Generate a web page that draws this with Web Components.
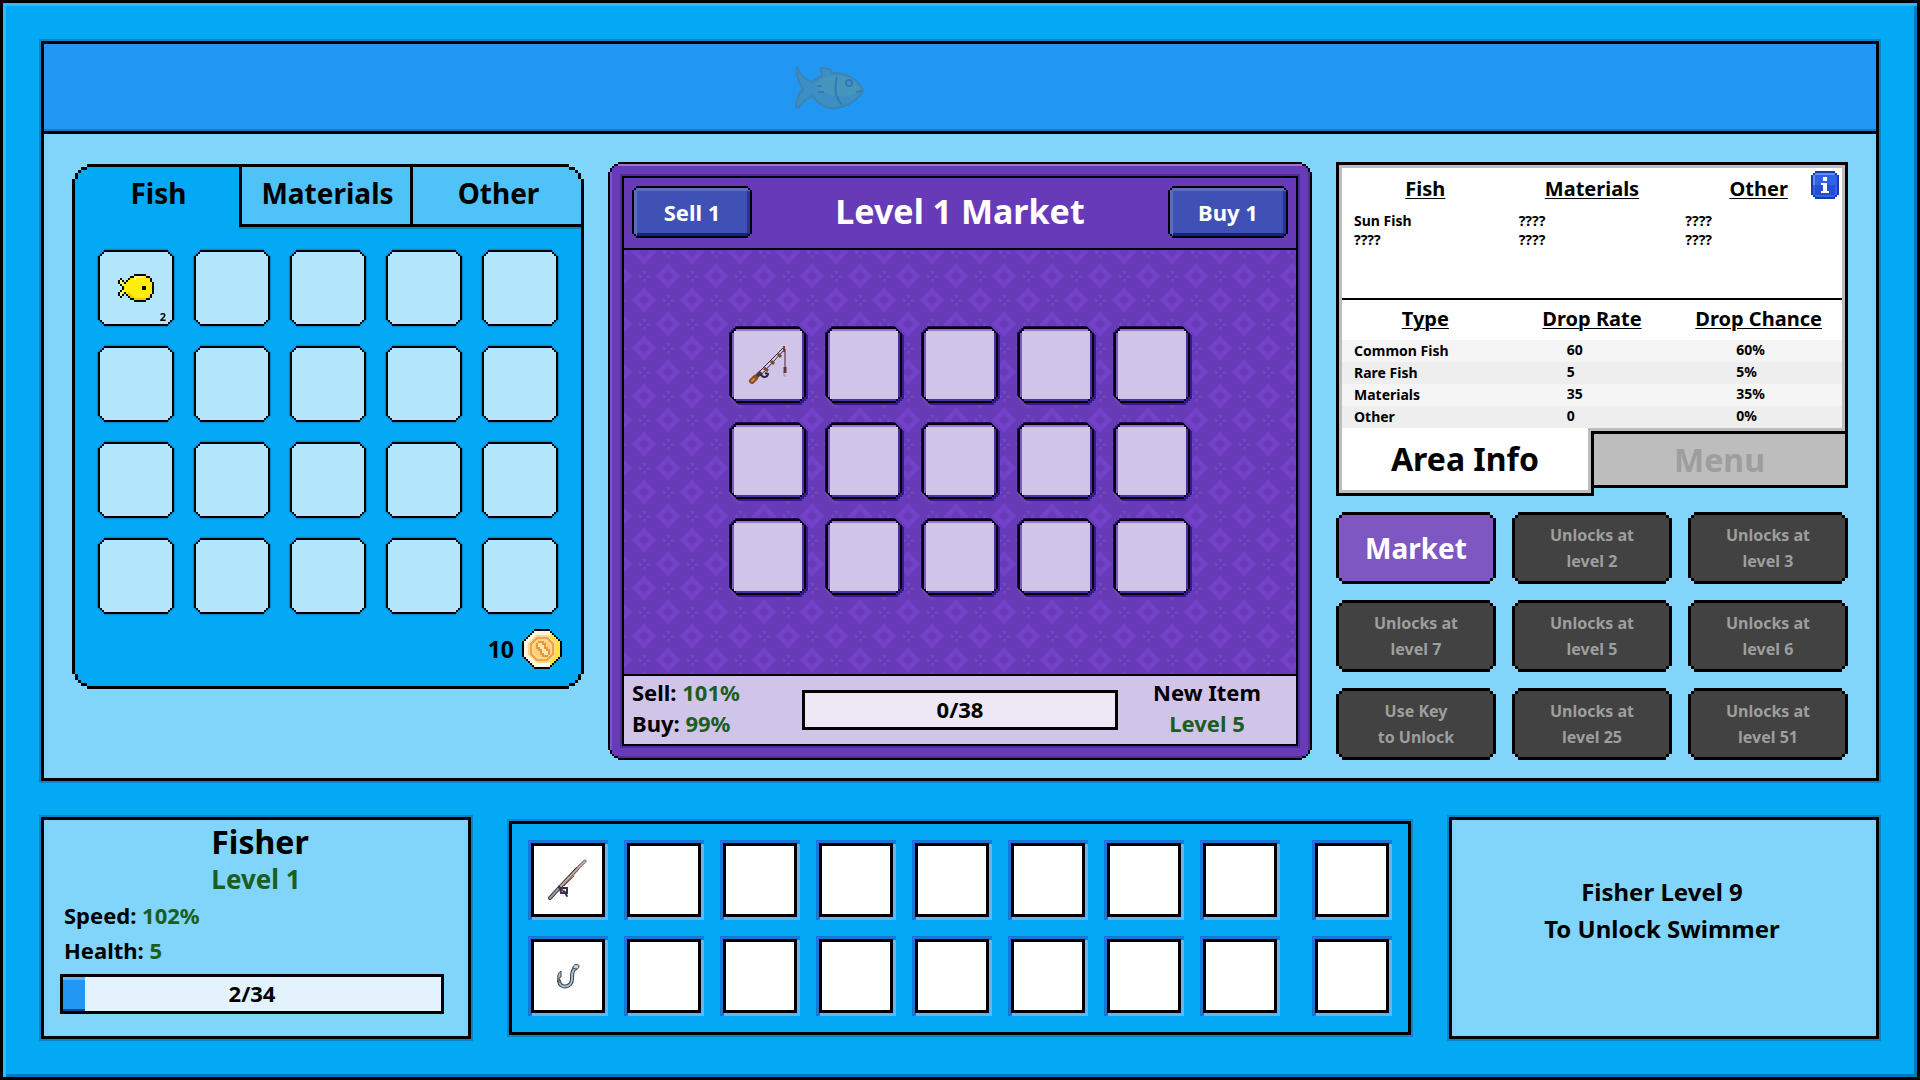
<!DOCTYPE html>
<html lang="en">
<head>
<meta charset="utf-8">
<title>Fisher</title>
<style>
    body {
        margin: 0;
        background: #03a9f4;
        color: #000;
        font-family: "Noto Sans", "Open Sans", sans-serif;
        font-weight: 700;
    }
</style>
</head>
<body>
<game-app></game-app>

<script>
// polygon with stair-stepped corners, the points are in units of --u
function stairs(points) {
    const far = (n) => `calc(100% - ${n} * var(--u))`;
    const near = (n) => `calc(${n} * var(--u))`;
    const back = [...points].reverse();
    return "polygon(" + [
        ...points.map(([x, y]) => `${near(x)} ${near(y)}`),
        ...back.map(([x, y]) => `${far(x)} ${near(y)}`),
        ...points.map(([x, y]) => `${far(x)} ${far(y)}`),
        ...back.map(([x, y]) => `${near(x)} ${far(y)}`)
    ].join(",") + ")";
}

const CORNERS = {
    small: {
        outer: [[0, 2], [1, 2], [1, 1], [2, 1], [2, 0]],
        inner: [[0, 1], [1, 1], [1, 0]]
    },
    medium: {
        outer: [[0, 3], [1, 3], [1, 2], [2, 2], [2, 1], [3, 1], [3, 0]],
        inner: [[0, 2], [1, 2], [1, 1], [2, 1], [2, 0]]
    },
    large: {
        outer: [[0, 5], [1, 5], [1, 3], [2, 3], [2, 2], [3, 2], [3, 1], [5, 1], [5, 0]],
        inner: [[0, 4], [1, 4], [1, 2], [2, 2], [2, 1], [4, 1], [4, 0]]
    }
};

class PixelFrame extends HTMLElement {
    connectedCallback() {
        const corner = CORNERS[this.getAttribute("corner") || "medium"];
        this.attachShadow({mode: "open"});
        this.shadowRoot.innerHTML = `
            <style>
                :host { display: grid; --u: 2px; }
                .edge {
                    display: grid;
                    padding: var(--u);
                    background: #000;
                    clip-path: ${stairs(corner.outer)};
                }
                .face {
                    display: grid;
                    min-width: 0;
                    background: var(--face, #b3e5fc);
                    box-shadow: var(--bevel, none);
                    clip-path: ${stairs(corner.inner)};
                }
            </style>
            <div class="edge"><div class="face"><slot></slot></div></div>
        `;
    }
}

class GameButton extends HTMLElement {
    connectedCallback() {
        const corner = CORNERS[this.getAttribute("corner") || "small"];
        const disabled = this.hasAttribute("locked") ? "disabled" : "";
        this.attachShadow({mode: "open"});
        this.shadowRoot.innerHTML = `
            <style>
                :host { display: grid; --u: 3px; }
                button {
                    display: grid;
                    margin: 0;
                    padding: var(--u);
                    border: 0;
                    background: #000;
                    color: inherit;
                    font: inherit;
                    text-align: center;
                    cursor: pointer;
                    clip-path: ${stairs(corner.outer)};
                }
                button:disabled { cursor: default; }
                span {
                    display: grid;
                    place-content: center;
                    background: var(--face);
                    box-shadow: var(--bevel, none);
                    clip-path: ${stairs(corner.inner)};
                }
            </style>
            <button type="button" ${disabled}><span><slot></slot></span></button>
        `;
    }
}

const ART = {
    sunfish: {
        colors: {k: "#0a0a10", y: "#ffee0a", h: "#fff68a", d: "#eccc00"},
        rows: [
            "........kkkkkk....",
            "......kkhhhhhykk..",
            ".k...kyyhyyyyyyyk.",
            "khk.kyyyyyyyyyyyk.",
            "khykyyyyyyyyyyyyyk",
            ".khyyyyyyyyyyyyyyk",
            "..kyyyyyyyyykkyyyk",
            "..kyyyyyyyyykkyyyk",
            ".khyyyyyyyyyyyyyyk",
            "khykydyyyyyyyyyyyk",
            "khk.kddyyyyyyyyyk.",
            ".k...kddyyyyyyydk.",
            "......kkddddddkk..",
            "........kkkkkk...."
        ]
    }
};

// draws rows of characters as 2px squares
class PixelArt extends HTMLElement {
    connectedCallback() {
        const {rows, colors} = ART[this.getAttribute("name")];
        const w = rows[0].length;
        const h = rows.length;
        let rects = "";
        rows.forEach((row, y) => [...row].forEach((c, x) => {
            if (c !== ".") rects += `<rect x="${x}" y="${y}" width="1" height="1" fill="${colors[c]}"/>`;
        }));
        this.attachShadow({mode: "open"});
        this.shadowRoot.innerHTML = `
            <style>:host, svg { display: block; }</style>
            <svg width="${w * 2}" height="${h * 2}" viewBox="0 0 ${w} ${h}" shape-rendering="crispEdges" aria-hidden="true">${rects}</svg>
        `;
    }
}

const ICONS = {
    coin: `<svg width="40" height="40" viewBox="0 0 20 20" shape-rendering="crispEdges">
        <path fill="#000" d="M6 0h8v1h1v1h1v1h1v1h1v1h1v1h1v8h-1v1h-1v1h-1v1h-1v1h-1v1h-1v1H6v-1H5v-1H4v-1H3v-1H2v-1H1v-1H0V6h1V5h1V4h1V3h1V2h1V1h1z"/>
        <path fill="#fffbe0" d="M6 1h8v1h1v1h1v1h1v1h1v1h1v8h-1v1h-1v1h-1v1h-1v1h-1v1H6v-1H5v-1H4v-1H3v-1H2v-1H1V6h1V5h1V4h1V3h1V2h1z"/>
        <path fill="#ffe23d" d="M14 2h1v1h1v1h1v1h1v1h1v8h-1v1h-1v1h-1v1h-1v1h-1v-2l2-2V7l-2-3z"/>
        <path fill="#ffd98a" d="M7 3h6l4 4v6l-4 4H7l-4-4V7z"/>
        <path fill="none" stroke="#f3a24c" d="M7.500 4.500h5l3 3v5l-3 3h-5l-3-3v-5z"/>
        <path fill="#ffd07a" d="M8 6h4l2 2v4l-2 2H8l-2-2V8z"/>
        <path fill="#ec9443" d="M8 6h3v1h1v2h1v1h1v3h-1v1h-3v-1H9v-2H8v-1H7V7h1z"/>
        <path fill="#ffe7a8" d="M8 7h2v1h1v2h1v1h1v2h-2v-1h-1v-2H9V9H8z"/>
    </svg>`,
    caneRod: `<svg width="42" height="42" viewBox="0 0 42 42" fill="none">
        <path stroke="#3e2a35" d="M10 30 37 3M13 32 38 5"/>
        <path stroke="#dccbd6" d="M12 30 38 4"/>
        <path stroke="#7b4a2d" stroke-width="3" d="M17 24l4 3M24 17l3 3M31 10l3 3"/>
        <path stroke="#4b3340" stroke-width="4" d="M8 34l6-6"/>
        <path stroke="#8a4d24" stroke-width="6" stroke-linecap="round" d="M5 37l3-3"/>
        <path stroke="#d08a42" stroke-width="2" stroke-linecap="round" d="M5 37l2-2"/>
        <path stroke="#2c2740" stroke-width="2" d="M14 30c1 4 6 4 7 0l-3-1"/>
        <path stroke="#8a3a32" stroke-width="2" d="M37 2v6"/>
        <path stroke="#4b2530" d="M38 5v20"/>
        <path stroke="#5b3a3a" stroke-width="3" d="M38 23v6"/>
        <path stroke="#9b8f9c" d="M37 29v3h2"/>
    </svg>`,
    metalRod: `<svg width="42" height="42" viewBox="0 0 42 42" fill="none" stroke-linecap="round">
        <path stroke="#352f3a" stroke-width="4" d="M3 39 13 28"/>
        <path stroke="#9a98a8" stroke-width="2" d="M3 39 13 28"/>
        <path stroke="#43373a" stroke-width="4" d="M13 28 30 10"/>
        <path stroke="#43373a" stroke-width="3" d="M28 12 38 2"/>
        <path stroke="#c3a59b" stroke-width="2" d="M14 27 38 2"/>
        <path stroke="#7c5a54" d="M17 27 27 17"/>
        <path stroke="#38324f" stroke-width="2" d="M13 29h7v5h-6zM18 34l2 3M15 31l3 2"/>
        <path stroke="#a6a2c5" d="M16 31h2"/>
    </svg>`,
    hook: `<svg width="24" height="26" viewBox="0 0 24 26" fill="none" stroke-linecap="round" stroke-linejoin="round">
        <path stroke="#39454f" stroke-width="4" d="M3 18C4 26 16 25 16 16c0-5 0-9 4-11"/>
        <path stroke="#a9bcc9" stroke-width="2" d="M3 18C4 26 16 25 16 16c0-5 0-9 4-11"/>
        <path stroke="#39454f" fill="#c4d2db" d="M17 5c0-5 6-4 6-2 0 3-3 4-6 2z"/>
        <path stroke="#39454f" fill="#a9bcc9" d="M2 18c-1-5 0-8 3-10v6l-2 1v4z"/>
    </svg>`,
    info: `<svg width="28" height="28" viewBox="0 0 28 28" shape-rendering="crispEdges">
        <path fill="#173ba8" d="M4 0h20v2h2v2h2v20h-2v2h-2v2H4v-2H2v-2H0V4h2V2h2z"/>
        <path fill="#2e63e6" d="M4 2h20v2h2v20h-2v2H4v-2H2V4h2z"/>
        <path fill="#5f8ff5" d="M4 2h20v2H4zM2 4h2v10H2z"/>
        <path fill="#2450cf" d="M4 14h20v10H4z"/>
        <path fill="#fff" d="M12 6h4v4h-4zM10 12h6v8h2v2h-8v-2h2v-6h-2z"/>
    </svg>`,
    swimmer: `<svg width="70" height="46" viewBox="0 0 70 46">
        <path fill="#3c8fc4" stroke="#3c85b2" stroke-width="2" stroke-linejoin="round" d="M2 2c3 8 9 13 15 15 3-2 6-4 10-6l-1-8 9 1 2 4c14-1 26 6 31 17-4 9-14 16-27 18-11 1-17-3-23-12-5 2-11 6-15 12l-2-1c0-6 2-12 7-18C4 18 1 10 2 2z"/>
        <path fill="#4596bd" d="M20 21C30 5 58 8 66 26c-12 8-32 8-46-5z"/>
        <path fill="none" stroke="#3478b4" stroke-width="2" d="M42 12c-2 8-3 15 1 22l4 6M22 21h5M23 27h6M67 26l-6 1"/>
        <circle cx="54" cy="18" r="4" fill="#2f78bd"/>
        <circle cx="54" cy="18" r="2" fill="#4a93bd"/>
    </svg>`
};

class GameIcon extends HTMLElement {
    connectedCallback() {
        this.attachShadow({mode: "open"});
        this.shadowRoot.innerHTML = `
            <style>:host, svg { display: block; }</style>
            ${ICONS[this.getAttribute("name")]}
        `;
    }
}

class ItemSlot extends HTMLElement {
    connectedCallback() {
        const count = this.getAttribute("count") || "";
        this.attachShadow({mode: "open"});
        this.shadowRoot.innerHTML = `
            <style>
                :host { display: block; width: 76px; height: 76px; filter: var(--slot-shadow); }
                pixel-frame { height: 100%; --face: var(--slot-face, #b3e5fc); }
                .cell { display: grid; place-items: center; position: relative; }
                small {
                    position: absolute;
                    right: 6px;
                    bottom: 0;
                    font-size: 11px;
                    line-height: 14px;
                }
            </style>
            <pixel-frame>
                <div class="cell"><slot></slot>${count ? `<small>${count}</small>` : ""}</div>
            </pixel-frame>
        `;
    }
}

class ProgressBar extends HTMLElement {
    connectedCallback() {
        const value = Number(this.getAttribute("value"));
        const max = Number(this.getAttribute("max"));
        this.attachShadow({mode: "open"});
        this.shadowRoot.innerHTML = `
            <style>
                :host { display: block; }
                .bar {
                    display: grid;
                    height: 34px;
                    border: 3px solid #000;
                    background: var(--track, #e3f2fd);
                    font-size: 22px;
                    line-height: 32px;
                    text-align: center;
                }
                .bar > * { grid-area: 1 / 1; }
                .fill {
                    width: ${value / max * 100}%;
                    background: #2196f3;
                    box-shadow: inset 0 3px #64b5f6, inset 0 -2px #0d47a1;
                }
            </style>
            <div class="bar" role="progressbar" aria-valuenow="${value}" aria-valuemax="${max}">
                <div class="fill"></div>
                <div>${value}/${max}</div>
            </div>
        `;
    }
}

class InventoryPanel extends HTMLElement {
    connectedCallback() {
        this.attachShadow({mode: "open"});
        this.shadowRoot.innerHTML = `
            <style>
                :host { display: block; }
                pixel-frame { --u: 3px; --face: #03a9f4; }
                .tabs { display: grid; grid-template-columns: 164fr 171fr 171fr; }
                .tabs button {
                    height: 60px;
                    margin: 0;
                    padding: 0 0 6px 3px;
                    border: solid #000;
                    border-width: 0 0 3px 3px;
                    background: #4fc3f7;
                    box-shadow: 0 2px #0a86c6;
                    color: inherit;
                    font: inherit;
                    font-size: 28px;
                    cursor: pointer;
                }
                .tabs button[aria-selected="true"] {
                    padding-bottom: 9px;
                    border-width: 0;
                    background: none;
                    box-shadow: none;
                }
                .slots {
                    display: grid;
                    grid-template-columns: repeat(5, 76px);
                    justify-content: center;
                    gap: 20px;
                    padding: 23px 0 15px;
                    --slot-shadow: drop-shadow(0 0 1px #0a4f86);
                }
                .coins {
                    display: flex;
                    align-items: center;
                    justify-content: flex-end;
                    gap: 8px;
                    padding: 0 19px 17px;
                    font-size: 23px;
                    line-height: 30px;
                }
            </style>
            <pixel-frame corner="large">
                <div>
                    <div class="tabs" role="tablist">
                        <button type="button" role="tab" aria-selected="true">Fish</button>
                        <button type="button" role="tab" aria-selected="false">Materials</button>
                        <button type="button" role="tab" aria-selected="false">Other</button>
                    </div>
                    <div class="slots">
                        <item-slot count="2"><pixel-art name="sunfish"></pixel-art></item-slot>
                        ${"<item-slot></item-slot>".repeat(19)}
                    </div>
                    <div class="coins">10 <game-icon name="coin"></game-icon></div>
                </div>
            </pixel-frame>
        `;
    }
}

// four 3px dots around a point of the market wallpaper
function dots(x, y, r) {
    return [[0, -r], [r, 0], [0, r], [-r, 0]]
        .map(([dx, dy]) => `<rect x="${x + dx - 1}" y="${y + dy - 1}" width="3" height="3"/>`)
        .join("");
}

class MarketPanel extends HTMLElement {
    connectedCallback() {
        // the tile repeats, so what crosses an edge is drawn on both sides
        const diamonds = [[24, 0], [24, 48], [0, 24], [48, 24]];
        const crosses = [[24, 24], [0, 0], [48, 0], [0, 48], [48, 48]];
        this.attachShadow({mode: "open"});
        this.shadowRoot.innerHTML = `
            <style>
                :host { display: grid; }
                .frame {
                    --face: #673ab7;
                    --bevel: inset 0 2px #9575cd, inset 2px 0 #7e57c2, inset 0 -2px #512da8, inset -2px 0 #512da8;
                }
                .inner {
                    display: grid;
                    grid-template-rows: auto 1fr auto;
                    margin: 12px;
                    border: 2px solid #000;
                    box-shadow: 0 0 0 2px #4f2c9c;
                }
                header {
                    display: flex;
                    align-items: center;
                    justify-content: space-between;
                    padding: 8px 8px 10px;
                    border-bottom: 2px solid #000;
                    color: #fff;
                }
                h2 { margin: 0; padding-bottom: 2px; font-size: 34px; line-height: 44px; }
                game-button {
                    width: 120px;
                    height: 52px;
                    --u: 2px;
                    --face: #3f51b5;
                    --bevel: inset 0 3px #5c6bc0, inset 3px 0 #5c6bc0, inset 0 -3px #1a237e, inset -3px 0 #283593;
                    font-size: 22px;
                }
                .goods { display: grid; background: #673ab7; }
                .goods > * { grid-area: 1 / 1; }
                .goods > svg { width: 100%; height: 100%; min-height: 0; }
                .slots {
                    display: grid;
                    grid-template-columns: repeat(5, 76px);
                    place-content: center;
                    gap: 20px;
                    padding-bottom: 2px;
                    --slot-face: #d1c4e9;
                    --slot-shadow: drop-shadow(-1px -1px 0 #1a0c5c) drop-shadow(2px 2px 0 #311b92);
                }
                footer {
                    display: grid;
                    grid-template-columns: 178fr 316fr 178fr;
                    align-items: center;
                    height: 68px;
                    border-top: 2px solid #000;
                    background: #d1c4e9;
                    font-size: 22px;
                    line-height: 31px;
                    --track: #ede7f6;
                }
                .rates, .next { padding-bottom: 4px; }
                .rates { padding-left: 8px; }
                .next { text-align: center; }
                b { color: #1b5e20; font-weight: inherit; }
            </style>
            <pixel-frame class="frame" corner="large">
                <div class="inner">
                    <header>
                        <game-button>Sell 1</game-button>
                        <h2>Level 1 Market</h2>
                        <game-button>Buy 1</game-button>
                    </header>
                    <div class="goods">
                        <svg aria-hidden="true">
                            <defs>
                                <pattern id="weave" width="48" height="48" patternUnits="userSpaceOnUse" x="-4" y="2">
                                    <g fill="none" stroke="#7441c8" stroke-width="5">
                                        ${diamonds.map(([x, y]) => `<path d="M${x} ${y - 9}l9 9-9 9-9-9z"/>`).join("")}
                                    </g>
                                    <g fill="#7441c8">
                                        ${crosses.map(([x, y]) => dots(x, y, 4)).join("")}
                                    </g>
                                </pattern>
                            </defs>
                            <rect width="100%" height="100%" fill="url(#weave)"/>
                        </svg>
                        <div class="slots">
                            <item-slot><game-icon name="caneRod"></game-icon></item-slot>
                            ${"<item-slot></item-slot>".repeat(14)}
                        </div>
                    </div>
                    <footer>
                        <div class="rates">
                            <div>Sell: <b>101%</b></div>
                            <div>Buy: <b>99%</b></div>
                        </div>
                        <progress-bar value="0" max="38"></progress-bar>
                        <div class="next">
                            <div>New Item</div>
                            <b>Level 5</b>
                        </div>
                    </footer>
                </div>
            </pixel-frame>
        `;
    }
}

class AreaInfo extends HTMLElement {
    connectedCallback() {
        const rows = [
            ["Common Fish", "60", "60%"],
            ["Rare Fish", "5", "5%"],
            ["Materials", "35", "35%"],
            ["Other", "0", "0%"]
        ];
        this.attachShadow({mode: "open"});
        this.shadowRoot.innerHTML = `
            <style>
                :host { display: block; }
                .box {
                    position: relative;
                    padding: 3px;
                    border: 3px solid #000;
                    background: #fff;
                    box-shadow: inset 0 0 0 3px #bdbdbd;
                }
                .info {
                    position: absolute;
                    top: 6px;
                    right: 6px;
                    padding: 0;
                    border: 0;
                    background: none;
                    cursor: pointer;
                }
                table { width: 100%; table-layout: fixed; border-collapse: collapse; font-size: 14px; }
                th {
                    padding: 0;
                    font-size: 20px;
                    line-height: 28px;
                    text-decoration: underline;
                    text-decoration-thickness: 1px;
                    text-underline-offset: 2px;
                }
                td { padding: 0 0 0 12px; }
                .finds { box-sizing: border-box; height: 132px; padding-top: 7px; border-bottom: 2px solid #000; }
                .finds th { padding-bottom: 8px; }
                .finds td { line-height: 19px; }
                .finds td + td { padding-left: 10px; }
                .rates th { box-sizing: border-box; height: 40px; padding-bottom: 2px; line-height: 38px; }
                .rates td { line-height: 22px; }
                .rates td + td { padding: 0 0 2px 58px; line-height: 20px; }
                .rates td:last-child { padding-left: 61px; }
                .rates tbody tr { background: #f5f5f5; }
                .rates tbody tr:nth-child(even) { background: #eee; }
                .tabs { display: grid; grid-template-columns: 258fr 254fr; align-items: start; }
                .tabs button {
                    margin: 0;
                    padding: 0;
                    border: solid #000;
                    color: inherit;
                    font: inherit;
                    font-size: 32px;
                    line-height: 44px;
                    cursor: pointer;
                }
                /* the open tab covers the lower edge of the box */
                .tabs .area {
                    display: grid;
                    position: relative;
                    margin-top: -3px;
                    border-width: 0 3px 3px;
                    background: #fff;
                }
                .area span {
                    margin-top: -3px;
                    padding: 9px 0;
                    border: solid #bdbdbd;
                    border-width: 0 3px 3px;
                    background: #fff;
                }
                .tabs .menu {
                    height: 54px;
                    border-width: 0 3px 3px 0;
                    background: #bdbdbd;
                    color: #9e9e9e;
                }
            </style>
            <div class="box">
                <button class="info" type="button" aria-label="Help"><game-icon name="info"></game-icon></button>
                <div class="finds">
                    <table>
                        <thead><tr><th>Fish</th><th>Materials</th><th>Other</th></tr></thead>
                        <tbody>
                            <tr><td>Sun Fish</td><td>????</td><td>????</td></tr>
                            <tr><td>????</td><td>????</td><td>????</td></tr>
                        </tbody>
                    </table>
                </div>
                <table class="rates">
                    <thead><tr><th>Type</th><th>Drop Rate</th><th>Drop Chance</th></tr></thead>
                    <tbody>
                        ${rows.map((r) => `<tr>${r.map((c) => `<td>${c}</td>`).join("")}</tr>`).join("")}
                    </tbody>
                </table>
            </div>
            <div class="tabs" role="tablist">
                <button class="area" type="button" role="tab" aria-selected="true"><span>Area Info</span></button>
                <button class="menu" type="button" role="tab" aria-selected="false">Menu</button>
            </div>
        `;
    }
}

class AreaButtons extends HTMLElement {
    connectedCallback() {
        const locked = [
            "Unlocks at<br>level 2", "Unlocks at<br>level 3",
            "Unlocks at<br>level 7", "Unlocks at<br>level 5", "Unlocks at<br>level 6",
            "Use Key<br>to Unlock", "Unlocks at<br>level 25", "Unlocks at<br>level 51"
        ];
        this.attachShadow({mode: "open"});
        this.shadowRoot.innerHTML = `
            <style>
                :host { display: grid; grid-template-columns: repeat(3, 1fr); gap: 16px; }
                game-button {
                    height: 72px;
                    --face: #424242;
                    color: #9e9e9e;
                    font-size: 16px;
                    line-height: 26px;
                }
                .market { --face: #7e57c2; color: #fff; font-size: 28px; line-height: 38px; }
            </style>
            <game-button class="market">Market</game-button>
            ${locked.map((text) => `<game-button locked>${text}</game-button>`).join("")}
        `;
    }
}

class FisherPanel extends HTMLElement {
    connectedCallback() {
        this.attachShadow({mode: "open"});
        this.shadowRoot.innerHTML = `
            <style>
                :host { display: block; }
                h2, h3 { margin: 0; text-align: center; }
                h2 { padding: 0 0 0 8px; font-size: 32px; line-height: 44px; }
                h3 { font-size: 26px; line-height: 30px; }
                .stats { padding: 4px 20px 6px; font-size: 22px; line-height: 35px; }
                h3, b { color: #1b5e20; }
                b { font-weight: inherit; }
                progress-bar { margin: 0 24px 22px 16px; }
            </style>
            <h2>Fisher</h2>
            <h3>Level 1</h3>
            <div class="stats">
                <div>Speed: <b>102%</b></div>
                <div>Health: <b>5</b></div>
            </div>
            <progress-bar value="2" max="34"></progress-bar>
        `;
    }
}

class GearBar extends HTMLElement {
    connectedCallback() {
        const cells = "<div></div>".repeat(7);
        this.attachShadow({mode: "open"});
        this.shadowRoot.innerHTML = `
            <style>
                :host { display: flex; justify-content: space-between; padding: 19px; }
                .group { display: grid; grid-template-columns: repeat(8, 74px); gap: 22px; }
                .extra { grid-template-columns: 74px; }
                .group > div {
                    display: grid;
                    place-items: center;
                    box-sizing: border-box;
                    height: 74px;
                    border: 3px solid #000;
                    background: #fff;
                    box-shadow: 2px 2px 0 1px #64b5f6, 0 0 0 3px #1976d2;
                }
            </style>
            <div class="group">
                <div><game-icon name="metalRod"></game-icon></div>${cells}
                <div><game-icon name="hook"></game-icon></div>${cells}
            </div>
            <div class="group extra"><div></div><div></div></div>
        `;
    }
}

class GameApp extends HTMLElement {
    connectedCallback() {
        this.attachShadow({mode: "open"});
        this.shadowRoot.innerHTML = `
            <style>
                :host {
                    display: grid;
                    align-content: start;
                    gap: 36px;
                    box-sizing: border-box;
                    min-height: 100vh;
                    padding: 38px;
                    border: 3px solid #000;
                    box-shadow: inset 3px 3px #35b8f6, inset -3px -3px #0277bd;
                }
                main, .card {
                    border: 3px solid #000;
                    background: #81d4fa;
                    box-shadow: 0 0 0 2px #0f84c4;
                }
                .banner {
                    display: flex;
                    align-items: center;
                    height: 87px;
                    padding-left: 41%;
                    border-bottom: 3px solid #000;
                    background: #2196f3;
                    box-shadow: inset 0 -2px #1c78c8;
                }
                .panels {
                    display: grid;
                    grid-template-columns: 512fr 704fr 512fr;
                    gap: 24px;
                    padding: 28px 28px 18px;
                }
                inventory-panel { align-self: start; margin-top: 2px; }
                .side { display: grid; gap: 16px; align-content: start; }
                .bottom {
                    display: grid;
                    grid-template-columns: 430fr 902fr 430fr;
                    gap: 38px;
                    align-items: center;
                }
                .gear { background: #03a9f4; }
                .goal {
                    display: grid;
                    align-self: stretch;
                    place-content: center;
                    padding: 0 4px 36px 0;
                    font-size: 24px;
                    line-height: 37px;
                    text-align: center;
                }
            </style>
            <main>
                <div class="banner"><game-icon name="swimmer"></game-icon></div>
                <div class="panels">
                    <inventory-panel></inventory-panel>
                    <market-panel></market-panel>
                    <div class="side">
                        <area-info></area-info>
                        <area-buttons></area-buttons>
                    </div>
                </div>
            </main>
            <div class="bottom">
                <fisher-panel class="card"></fisher-panel>
                <gear-bar class="card gear"></gear-bar>
                <div class="card goal">Fisher Level 9<br>To Unlock Swimmer</div>
            </div>
        `;
    }
}

window.customElements.define('pixel-frame', PixelFrame);
window.customElements.define('game-button', GameButton);
window.customElements.define('pixel-art', PixelArt);
window.customElements.define('game-icon', GameIcon);
window.customElements.define('item-slot', ItemSlot);
window.customElements.define('progress-bar', ProgressBar);
window.customElements.define('inventory-panel', InventoryPanel);
window.customElements.define('market-panel', MarketPanel);
window.customElements.define('area-info', AreaInfo);
window.customElements.define('area-buttons', AreaButtons);
window.customElements.define('fisher-panel', FisherPanel);
window.customElements.define('gear-bar', GearBar);
window.customElements.define('game-app', GameApp);
</script>
</body>
</html>
